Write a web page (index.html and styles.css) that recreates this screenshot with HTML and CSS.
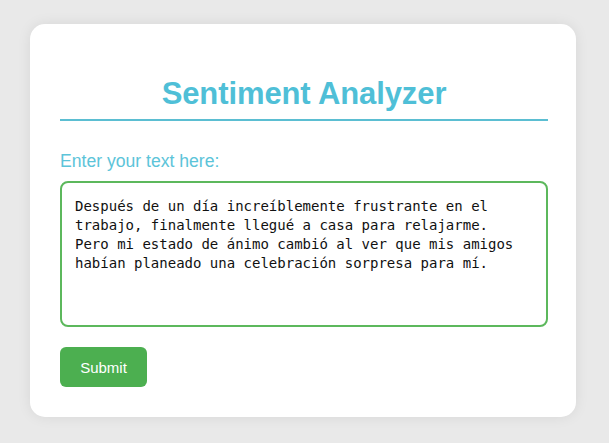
FILE: index.html
```html
<!DOCTYPE html>
<html>
<head>
<meta charset="utf-8">
<link rel="stylesheet" href="styles.css">
</head>
<body>
<div class="card">
  <h1 class="title">Sentiment Analyzer</h1>
  <label class="label" for="txt">Enter your text here:</label>
  <textarea id="txt" class="input">Después de un día increíblemente frustrante en el trabajo, finalmente llegué a casa para relajarme. Pero mi estado de ánimo cambió al ver que mis amigos habían planeado una celebración sorpresa para mí.</textarea>
  <button class="submit">Submit</button>
</div>
</body>
</html>
```

FILE: styles.css
```css
html, body {
  margin: 0;
  padding: 0;
  background: #e9e9e9;
  width: 609px;
  height: 443px;
  overflow: hidden;
}
.card {
  box-sizing: border-box;
  margin: 24px 0 0 30px;
  width: 546px;
  height: 393px;
  padding: 52px 28px 30px 30px;
  background: #ffffff;
  border-radius: 15px;
  box-shadow: 0 0 14px rgba(0, 0, 0, 0.08);
  display: flex;
  flex-direction: column;
  align-items: flex-start;
  font-family: "Liberation Sans", Arial, sans-serif;
}
.title {
  align-self: stretch;
  margin: 0;
  font-size: 31px;
  line-height: 36px;
  font-weight: bold;
  color: #4fbfd7;
  text-align: center;
  padding-bottom: 7px;
  border-bottom: 2px solid #5bbed2;
  letter-spacing: -0.1px;
}
.label {
  margin-top: 30px;
  font-size: 17.6px;
  line-height: 20px;
  color: #5cc4d9;
}
.input {
  box-sizing: border-box;
  margin-top: 10px;
  width: 488px;
  height: 146px;
  padding: 14px 30px 13px 13px;
  border: 2px solid #5cb85c;
  border-radius: 8px;
  font-family: "DejaVu Sans Mono", "Liberation Mono", monospace;
  font-size: 14px;
  line-height: 19px;
  color: #111;
  resize: none;
  outline: none;
  overflow: hidden;
}
.submit {
  margin-top: 20px;
  width: 87px;
  height: 40px;
  border: none;
  border-radius: 6px;
  background: #4caf50;
  color: #ffffff;
  font-family: "Liberation Sans", Arial, sans-serif;
  font-size: 15px;
  padding: 0;
}
```
